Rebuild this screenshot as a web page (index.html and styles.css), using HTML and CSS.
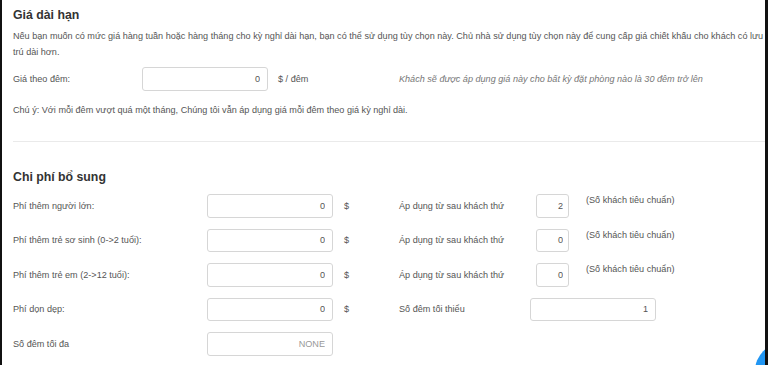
FILE: index.html
```html
<!DOCTYPE html>
<html>
<head>
  <title>Giá dài hạn</title>
  <link rel="stylesheet" href="styles.css">
</head>
<body>
  <div class="page">
    <!-- Long stay price -->
    <div class="section">
      <h2>Giá dài hạn</h2>
      <p class="desc">Nếu bạn muốn có mức giá hàng tuần hoặc hàng tháng cho kỳ nghỉ dài hạn, bạn có thể sử dụng tùy chọn này. Chủ nhà sử dụng tùy chọn này để cung cấp giá chiết khấu cho khách có lưu trú dài hơn.</p>

      <div class="rate-row">
        <div class="rate-left">
          <span class="rate-label">Giá theo đêm:</span>
          <input class="field" type="text" value="0">
          <span class="unit">$ / đêm</span>
        </div>
        <span class="hint">Khách sẽ được áp dụng giá này cho bất kỳ đặt phòng nào là 30 đêm trở lên</span>
      </div>

      <p class="note">Chú ý: Với mỗi đêm vượt quá một tháng, Chúng tôi vẫn áp dụng giá mỗi đêm theo giá kỳ nghỉ dài.</p>
    </div>

    <hr class="divider">

    <!-- Extra fees -->
    <div class="section">
      <h2 class="fees-title">Chi phí bổ sung</h2>

      <div class="fee-row">
        <div class="fee-left">
          <span class="fee-label">Phí thêm người lớn:</span>
          <input class="field" type="text" value="0">
          <span class="unit">$</span>
        </div>
        <div class="fee-right">
          <span class="right-label">Áp dụng từ sau khách thứ</span>
          <input class="field small-field" type="text" value="2">
          <span class="guest-note">(Số khách tiêu chuẩn)</span>
        </div>
      </div>

      <div class="fee-row">
        <div class="fee-left">
          <span class="fee-label">Phí thêm trẻ sơ sinh (0-&gt;2 tuổi):</span>
          <input class="field" type="text" value="0">
          <span class="unit">$</span>
        </div>
        <div class="fee-right">
          <span class="right-label">Áp dụng từ sau khách thứ</span>
          <input class="field small-field" type="text" value="0">
          <span class="guest-note">(Số khách tiêu chuẩn)</span>
        </div>
      </div>

      <div class="fee-row">
        <div class="fee-left">
          <span class="fee-label">Phí thêm trẻ em (2-&gt;12 tuổi):</span>
          <input class="field" type="text" value="0">
          <span class="unit">$</span>
        </div>
        <div class="fee-right">
          <span class="right-label">Áp dụng từ sau khách thứ</span>
          <input class="field small-field" type="text" value="0">
          <span class="guest-note">(Số khách tiêu chuẩn)</span>
        </div>
      </div>

      <div class="fee-row">
        <div class="fee-left">
          <span class="fee-label">Phí dọn dẹp:</span>
          <input class="field" type="text" value="0">
          <span class="unit">$</span>
        </div>
        <div class="fee-right">
          <span class="right-label">Số đêm tối thiểu</span>
          <input class="field" type="text" value="1">
        </div>
      </div>

      <div class="fee-row">
        <div class="fee-left">
          <span class="fee-label">Số đêm tối đa</span>
          <input class="field" type="text" placeholder="NONE">
        </div>
      </div>
    </div>

    <div class="chat-bubble"></div>
  </div>
</body>
</html>
```

FILE: styles.css
```css
/* Page frame */
body {
  margin: 0;
  padding: 0;
  font-family: "Liberation Sans", Arial, sans-serif;
  font-size: 9.1px;
  color: #555;
  background-color: #ffffff;
}

.page {
  position: relative;
  height: 365px;
  overflow: hidden;
  border-left: 2px solid #111;
  border-right: 3px solid #111;
  padding-left: 11px;
  padding-top: 7px;
  box-sizing: border-box;
}

/* Headings and text */
h2 {
  margin: 0;
  font-size: 12.3px;
  line-height: 16px;
  font-weight: bold;
  color: #333;
}

.desc {
  margin: 4.5px 0 0 0;
  line-height: 16px;
}

.note {
  margin: 11px 0 0 0;
  line-height: 16px;
}

/* Input fields */
.field {
  width: 126px;
  height: 24px;
  box-sizing: border-box;
  border: 1px solid #d6d6d6;
  border-radius: 3px;
  padding: 0 7px;
  text-align: right;
  font-family: "Liberation Sans", Arial, sans-serif;
  font-size: 9.1px;
  color: #555;
  background-color: #fff;
}

.field::placeholder {
  color: #999;
}

.unit {
  margin-left: 10px;
}

/* Long stay row */
.rate-row {
  display: flex;
  align-items: center;
  margin-top: 7.5px;
}

.rate-left {
  display: flex;
  align-items: center;
  width: 386px;
}

.rate-label {
  width: 129px;
}

.hint {
  font-style: italic;
  color: #777;
}

/* Divider */
.divider {
  margin: 23px 0 0 0;
  border: none;
  border-top: 1px solid #eaeaea;
}

/* Extra fees */
.fees-title {
  margin-top: 27px;
  margin-bottom: 9px;
}

.fee-row {
  display: flex;
  align-items: center;
  height: 23.5px;
  margin-bottom: 11px;
}

.fee-row .field {
  height: 23.5px;
}

.fee-left {
  display: flex;
  align-items: center;
  width: 386px;
}

.fee-label {
  width: 194px;
}

.fee-left .unit {
  margin-left: 11px;
}

.fee-right {
  display: flex;
  align-items: center;
  height: 100%;
}

.right-label {
  width: 131px;
}

.small-field {
  width: 33px;
  margin-left: 6px;
  padding: 0 5px;
}

.guest-note {
  align-self: flex-start;
  line-height: 12px;
  margin-left: 17px;
}

/* Floating chat button, cut off by the window */
.chat-bubble {
  position: absolute;
  right: -46px;
  bottom: -34px;
  width: 56px;
  height: 56px;
  border-radius: 50%;
  background-color: #2196f3;
}
```
